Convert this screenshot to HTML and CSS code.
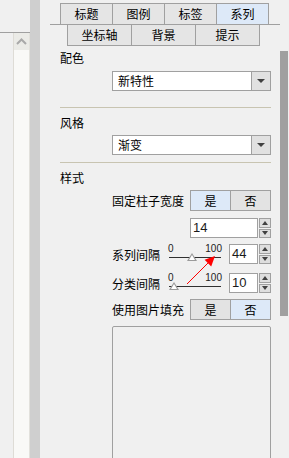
FILE: index.html
```html
<!DOCTYPE html>
<html lang="zh-CN">
<head>
    <meta charset="UTF-8">
    <meta name="viewport" content="width=device-width, initial-scale=1.0">
    <title>系列设置</title>
    <link rel="stylesheet" href="styles.css">
</head>
<body>
    <div class="app">
        <div class="side">
            <div class="side-rule"></div>
            <div class="side-scroll">
                <div class="side-up">
                    <svg width="11" height="7" viewBox="0 0 11 7"><polyline points="1,6 5.5,1.5 10,6" fill="none" stroke="#a9a9a9" stroke-width="2"/></svg>
                </div>
                <div class="side-track"></div>
            </div>
        </div>

        <div class="splitter"></div>

        <div class="panel">
            <div class="content">
                <div class="tabs tabs-top">
                    <div class="tab">标题</div>
                    <div class="tab">图例</div>
                    <div class="tab">标签</div>
                    <div class="tab active">系列</div>
                </div>
                <div class="tabs tabs-bottom">
                    <div class="tab">坐标轴</div>
                    <div class="tab">背景</div>
                    <div class="tab">提示</div>
                </div>

                <div class="section">
                    <div class="group-title">配色</div>
                    <div class="select">
                        <span class="select-value">新特性</span>
                        <span class="select-btn"><i class="arrow-down"></i></span>
                    </div>
                    <div class="rule"></div>

                    <div class="group-title after-rule">风格</div>
                    <div class="select">
                        <span class="select-value">渐变</span>
                        <span class="select-btn"><i class="arrow-down"></i></span>
                    </div>
                    <div class="rule tight"></div>

                    <div class="group-title after-rule">样式</div>

                    <div class="field-row">
                        <span class="field-label">固定柱子宽度</span>
                        <div class="toggle">
                            <span class="toggle-btn on">是</span>
                            <span class="toggle-btn">否</span>
                        </div>
                    </div>

                    <div class="field-row gap-7">
                        <div class="spin wide">
                            <span class="spin-value">14</span>
                            <span class="spin-btns">
                                <span class="spin-btn"><i class="arrow-up"></i></span>
                                <span class="spin-btn"><i class="arrow-down"></i></span>
                            </span>
                        </div>
                    </div>

                    <div class="sliders">
                        <div class="field-row slider-row">
                            <span class="field-label short">系列间隔</span>
                            <div class="slider">
                                <div class="slider-scale"><span>0</span><span>100</span></div>
                                <div class="slider-line"><span class="thumb" style="left:44%"></span></div>
                            </div>
                            <div class="spin">
                                <span class="spin-value">44</span>
                                <span class="spin-btns">
                                    <span class="spin-btn"><i class="arrow-up"></i></span>
                                    <span class="spin-btn"><i class="arrow-down"></i></span>
                                </span>
                            </div>
                        </div>

                        <div class="field-row slider-row gap-9">
                            <span class="field-label short">分类间隔</span>
                            <div class="slider">
                                <div class="slider-scale"><span>0</span><span>100</span></div>
                                <div class="slider-line"><span class="thumb" style="left:10%"></span></div>
                            </div>
                            <div class="spin">
                                <span class="spin-value">10</span>
                                <span class="spin-btns">
                                    <span class="spin-btn"><i class="arrow-up"></i></span>
                                    <span class="spin-btn"><i class="arrow-down"></i></span>
                                </span>
                            </div>
                        </div>

                        <!-- pointer drawn over the sliders -->
                        <svg class="pointer" width="110" height="45" viewBox="0 0 110 45">
                            <line x1="75" y1="40" x2="97" y2="18" stroke="#ff0000" stroke-width="1"/>
                            <polygon points="103,12 99.2,22.5 92.6,15.8" fill="#ff0000"/>
                        </svg>
                    </div>

                    <div class="field-row gap-6">
                        <span class="field-label">使用图片填充</span>
                        <div class="toggle">
                            <span class="toggle-btn off">是</span>
                            <span class="toggle-btn on">否</span>
                        </div>
                    </div>

                    <div class="image-box"></div>
                </div>
            </div>

            <div class="vscroll"><div class="vthumb"></div></div>
        </div>
    </div>
</body>
</html>
```

FILE: styles.css
```css
body {
    margin: 0;
    background-color: #f0f0f0;
    font-family: "Noto Sans CJK SC", "Liberation Sans", sans-serif;
    font-size: 12px;
    color: #000;
}
.app {
    display: flex;
    height: 458px;
    overflow: hidden;
}

/* left pane */
.side {
    width: 30px;
    display: flex;
    flex-direction: column;
}
.side-rule {
    margin-top: 32px;
    height: 1px;
    background-color: #a0a0a0;
}
.side-scroll {
    flex: 1;
    margin-left: 13px;
    display: flex;
    flex-direction: column;
    border-left: 1px solid #dedcd6;
    border-right: 1px solid #e2e1dc;
}
.side-up {
    height: 17px;
    background-color: #ebebe7;
    display: flex;
    justify-content: center;
    padding-top: 5px;
    box-sizing: border-box;
}
.side-track {
    flex: 1;
    background-color: #f9f9f7;
}
.splitter {
    width: 10px;
    background-color: #cfcfcf;
}

/* right panel */
.panel {
    flex: 1;
    display: flex;
}
.content {
    width: 240px;
    padding-top: 3px;
}
.vscroll {
    width: 9px;
    padding-top: 51px;
}
.vthumb {
    width: 8px;
    height: 265px;
    background-color: #a0a0a0;
}

/* tabs */
.tabs {
    display: flex;
}
.tab {
    box-sizing: border-box;
    height: 21px;
    line-height: 20px;
    text-align: center;
    background-color: #e5e5e5;
    border: 1px solid #a0a0a0;
    margin-right: -1px;
}
.tabs-top {
    margin-left: 10px;
    padding-left: 10px;
    border-bottom: 1px solid #a0a0a0;
}
.tabs-top .tab {
    width: 53px;
    border-bottom: none;
}
.tabs-top .tab.active {
    background-color: #dde9f8;
}
.tabs-bottom {
    padding-left: 27px;
}
.tabs-bottom .tab {
    width: 65px;
    border-top: none;
}

/* form */
.section {
    padding-left: 20px;
}
.group-title {
    height: 24px;
    line-height: 24px;
}
.group-title.after-rule {
    height: 27px;
    line-height: 29px;
}
.select {
    box-sizing: border-box;
    display: flex;
    margin: 1px 0 0 52px;
    width: 159px;
    height: 20px;
    border: 1px solid #a0a0a0;
    background-color: #fff;
}
.group-title.after-rule + .select {
    margin-top: 0;
}
.select-value {
    flex: 1;
    padding-left: 5px;
    line-height: 18px;
}
.select-btn {
    width: 18px;
    border-left: 1px solid #a0a0a0;
    background-color: #e1e1e1;
    display: flex;
    align-items: center;
    justify-content: center;
}
.arrow-down {
    width: 0;
    height: 0;
    border-left: 4px solid transparent;
    border-right: 4px solid transparent;
    border-top: 4px solid #404040;
}
.arrow-up {
    width: 0;
    height: 0;
    border-left: 4px solid transparent;
    border-right: 4px solid transparent;
    border-bottom: 4px solid #404040;
}
.rule {
    margin-top: 16px;
    width: 211px;
    height: 1px;
    background-color: #c8c4b1;
}
.rule.tight {
    margin-top: 7px;
}

.field-row {
    display: flex;
    align-items: center;
    justify-content: flex-end;
    margin-left: 52px;
    width: 159px;
}
.gap-6 { margin-top: 6px; }
.gap-7 { margin-top: 7px; }
.gap-9 { margin-top: 9px; }
.field-label {
    flex: 1;
    white-space: nowrap;
}
.field-label.short {
    flex: none;
    width: 55px;
}

.toggle {
    display: flex;
}
.toggle-btn {
    box-sizing: border-box;
    width: 41px;
    height: 21px;
    line-height: 19px;
    text-align: center;
    border: 1px solid #a0a0a0;
    background-color: #e3e3e3;
}
.toggle-btn + .toggle-btn {
    margin-left: -1px;
}
.toggle-btn.on {
    background-color: #dde9f8;
}

/* numeric inputs */
.spin {
    display: flex;
    width: 42px;
    height: 20px;
}
.spin.wide {
    width: 81px;
}
.spin-value {
    flex: 1;
    box-sizing: border-box;
    border: 1px solid #a0a0a0;
    background-color: #fff;
    font-family: "Liberation Sans", sans-serif;
    font-size: 13px;
    line-height: 18px;
    padding-left: 2px;
    color: #1a1a1a;
}
.spin-btns {
    width: 13px;
    display: flex;
    flex-direction: column;
    gap: 1px;
    padding-left: 1px;
    box-sizing: border-box;
}
.spin-btn {
    flex: 1;
    box-sizing: border-box;
    border: 1px solid #a0a0a0;
    background-color: #dedede;
    display: flex;
    align-items: center;
    justify-content: center;
}
.spin-btn .arrow-up,
.spin-btn .arrow-down {
    border-left-width: 3px;
    border-right-width: 3px;
}

/* sliders */
.sliders {
    position: relative;
    margin-top: 6px;
}
.slider-row {
    height: 20px;
}
.slider {
    width: 56px;
    height: 20px;
    margin-right: 6px;
}
.slider-scale {
    display: flex;
    justify-content: space-between;
    font-family: "Liberation Sans", sans-serif;
    font-size: 10px;
    line-height: 10px;
    color: #222;
    padding: 0 1px;
}
.slider-line {
    position: relative;
    margin: 3px 2px 0;
    height: 1px;
    background-color: #303030;
}
.thumb {
    position: absolute;
    top: -4px;
    margin-left: -5px;
    width: 0;
    height: 0;
    border-left: 5px solid transparent;
    border-right: 5px solid transparent;
    border-bottom: 8px solid #9a9a9a;
}
.thumb::after {
    content: "";
    position: absolute;
    left: -3px;
    top: 2px;
    border-left: 3px solid transparent;
    border-right: 3px solid transparent;
    border-bottom: 5px solid #fff;
}
.pointer {
    position: absolute;
    left: 52px;
    top: 0;
}

.image-box {
    box-sizing: border-box;
    margin: 6px 0 0 52px;
    width: 159px;
    height: 220px;
    border: 1px solid #a0a0a0;
    border-radius: 2px;
}
```
